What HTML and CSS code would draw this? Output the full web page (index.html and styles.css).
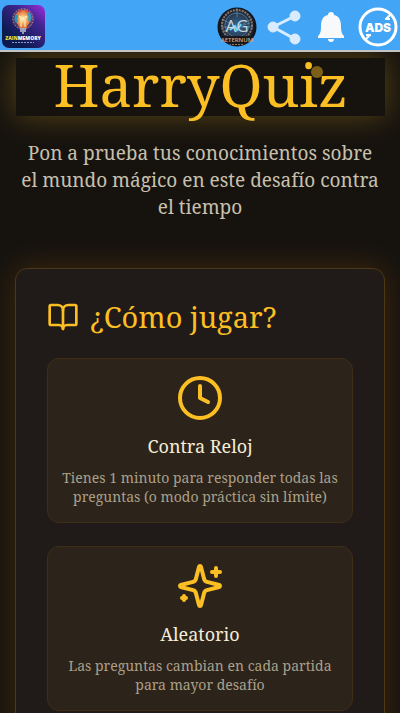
FILE: index.html
```
<!DOCTYPE html>
<html lang="es">
<head>
    <meta charset="UTF-8">
    <meta name="viewport" content="width=device-width, initial-scale=1.0">
    <title>HarryQuiz</title>
    <link rel="stylesheet" href="styles.css">
</head>
<body>
    <header class="topbar">
        <a class="brand" href="#" aria-label="ZainMemory">
            <svg class="brand-logo" viewBox="0 0 43 43">
                <defs>
                    <linearGradient id="brandBg" x1="1" y1="0" x2="0.3" y2="0.8">
                        <stop offset="0" stop-color="#a42be0"/>
                        <stop offset="0.4" stop-color="#40268f"/>
                        <stop offset="1" stop-color="#0b1b50"/>
                    </linearGradient>
                    <radialGradient id="bulb">
                        <stop offset="0" stop-color="#fff3c4"/>
                        <stop offset="0.5" stop-color="#f5ac62"/>
                        <stop offset="1" stop-color="#d76b3a"/>
                    </radialGradient>
                </defs>
                <rect width="43" height="43" rx="7" fill="url(#brandBg)"/>
                <circle cx="21" cy="14" r="11" fill="#df9b58" opacity="0.2"/>
                <circle cx="21" cy="14" r="10" fill="none" stroke="#e5ac70" stroke-width="1" stroke-dasharray="1 2"/>
                <path d="M17 23c0-4-4-5-4-10a8 8 0 0 1 16 0c0 5-4 6-4 10z" fill="url(#bulb)"/>
                <path d="M15 10a7 7 0 0 0 0 7" fill="none" stroke="#2797b4" stroke-width="3"/>
                <path d="M26 8a7 7 0 0 1 1 8" fill="none" stroke="#3b9dc9" stroke-width="3"/>
                <path d="M17 7l3-2M23 5l3 2" stroke="#e44b42" stroke-width="2"/>
                <path d="M19 22v-8l-2-3 4 2 4-2-2 3v8" fill="none" stroke="#fff0b5" stroke-width="1"/>
                <path d="M18 24h6M18 26h6M20 28h2" stroke="#bdc4dc" stroke-width="1.4"/>
                <text class="brand-name" x="21" y="35"><tspan fill="#f8d53c">ZAIN</tspan><tspan fill="#fff">MEMORY</tspan></text>
                <path d="M10 37.500h22" stroke="#8c9bc5" stroke-width="1" stroke-dasharray="2 1"/>
            </svg>
        </a>
        <nav class="actions">
            <a class="action" href="#" aria-label="Aeternum">
                <svg viewBox="0 0 40 40">
                    <defs>
                        <clipPath id="badgeClip"><circle cx="20" cy="20" r="19"/></clipPath>
                        <radialGradient id="badgeBg">
                            <stop offset="0" stop-color="#2a6c9c"/>
                            <stop offset="0.6" stop-color="#2d4058"/>
                            <stop offset="1" stop-color="#15171e"/>
                        </radialGradient>
                    </defs>
                    <circle cx="20" cy="20" r="19.500" fill="#11151d"/>
                    <circle cx="20" cy="19" r="18" fill="url(#badgeBg)"/>
                    <g clip-path="url(#badgeClip)">
                        <circle cx="20" cy="18" r="15" fill="none" stroke="#8a7468" stroke-width="2" stroke-dasharray="2 1"/>
                        <circle cx="20" cy="18" r="12" fill="none" stroke="#467797" stroke-width="1"/>
                        <path d="M5 12l9 5M35 12l-9 5M20 1v9M7 24l26-8M4 20h32" stroke="#6e91a2" stroke-width="1" opacity="0.7"/>
                        <path d="M13 23l5-4 2 4 4-6" fill="none" stroke="#68d8ff" stroke-width="2"/>
                        <rect y="29" width="40" height="11" fill="#17191f"/>
                        <path d="M12 37.500h16" stroke="#94745c" stroke-width="1" stroke-dasharray="2 1"/>
                    </g>
                    <text class="badge-initials" x="20" y="25">AG</text>
                    <text class="badge-name" x="20" y="35">AETERNUM</text>
                </svg>
            </a>
            <button class="action" type="button" aria-label="Compartir">
                <svg viewBox="0 0 40 40" fill="#d9ecff" stroke="#d9ecff">
                    <path d="M31 9L9 20l22 12" fill="none" stroke-width="3"/>
                    <circle cx="31" cy="9" r="5"/>
                    <circle cx="9" cy="20" r="5"/>
                    <circle cx="31" cy="32" r="5"/>
                </svg>
            </button>
            <button class="action" type="button" aria-label="Notificaciones">
                <svg viewBox="0 0 40 40" fill="#f8f9fb">
                    <path d="M17 8a3 3 0 1 1 6 0c5 1 7 5 7 11 0 6 1 8 3 10v2H7v-2c2-2 3-4 3-10 0-6 2-10 7-11z"/>
                    <path d="M17 32h6a3 3 0 0 1-6 0z"/>
                </svg>
            </button>
            <button class="action" type="button" aria-label="Quitar anuncios">
                <svg viewBox="0 0 40 40">
                    <circle cx="20" cy="20" r="18" fill="none" stroke="#fff" stroke-width="3"/>
                    <path d="M33 7l-5 5M27 12h5M7 33l5-5M8 28h5" stroke="#fff" stroke-width="2"/>
                    <text class="ads-text" x="20" y="25">ADS</text>
                </svg>
            </button>
        </nav>
    </header>

    <main class="page">
        <section class="hero">
            <h1 class="hero-title">HarryQuiz<span class="spark"></span></h1>
            <p class="hero-text">Pon a prueba tus conocimientos sobre el mundo mágico en este desafío contra el tiempo</p>
        </section>

        <section class="panel">
            <h2 class="panel-title">
                <svg class="panel-icon line-icon" viewBox="0 0 24 24">
                    <path d="M12 7v14"/>
                    <path d="M3 18a1 1 0 0 1-1-1V4a1 1 0 0 1 1-1h5a4 4 0 0 1 4 4 4 4 0 0 1 4-4h5a1 1 0 0 1 1 1v13a1 1 0 0 1-1 1h-6a3 3 0 0 0-3 3 3 3 0 0 0-3-3z"/>
                </svg>
                ¿Cómo jugar?
            </h2>
            <div class="rules">
                <article class="rule">
                    <svg class="rule-icon line-icon" viewBox="0 0 24 24">
                        <circle cx="12" cy="12" r="10"/>
                        <path d="M12 6v6l4 2"/>
                    </svg>
                    <h3 class="rule-title">Contra Reloj</h3>
                    <p class="rule-text">Tienes 1 minuto para responder todas las preguntas (o modo práctica sin límite)</p>
                </article>
                <article class="rule">
                    <svg class="rule-icon line-icon" viewBox="0 0 24 24">
                        <path d="M9.937 15.500A2 2 0 0 0 8.500 14.063l-6.135-1.582a.5.5 0 0 1 0-.962L8.500 9.936A2 2 0 0 0 9.937 8.500l1.582-6.135a.5.5 0 0 1 .963 0L14.063 8.500A2 2 0 0 0 15.500 9.937l6.135 1.581a.5.5 0 0 1 0 .964L15.500 14.063a2 2 0 0 0-1.437 1.437l-1.582 6.135a.5.5 0 0 1-.963 0z"/>
                        <path d="M20 3v4M22 5h-4M4 17v2M5 18H3"/>
                    </svg>
                    <h3 class="rule-title">Aleatorio</h3>
                    <p class="rule-text">Las preguntas cambian en cada partida para mayor desafío</p>
                </article>
            </div>
        </section>
    </main>
</body>
</html>
```
FILE: styles.css
```
* {
    box-sizing: border-box;
}

body {
    margin: 0;
    height: 100vh;
    display: flex;
    flex-direction: column;
    overflow: hidden;
    background-color: #16130f;
    color: #f5ecd7;
    font-family: "Noto Serif", "DejaVu Serif Condensed", "DejaVu Serif", serif;
}

h1, h2, h3, p {
    margin: 0;
    font-weight: 400;
}

svg {
    display: block;
}

/* Top bar */
.topbar {
    position: relative;
    z-index: 1;
    flex: none;
    display: flex;
    justify-content: space-between;
    align-items: center;
    height: 52px;
    padding: 3px 2px 0;
    background-color: #42a5f5;
    border-bottom: 2px solid #c4c4c4;
}

.brand-logo {
    width: 43px;
    height: 43px;
}

.brand-name {
    font: 800 5px "Open Sans", sans-serif;
    text-anchor: middle;
}

.actions {
    display: flex;
    gap: 7px;
}

.action {
    width: 40px;
    height: 40px;
    padding: 0;
    border: none;
    background: none;
    cursor: pointer;
}

.badge-initials {
    font: 400 17px "Open Sans", sans-serif;
    fill: #c6d5de;
    text-anchor: middle;
}

.badge-name {
    font: 600 6px "Open Sans", sans-serif;
    fill: #d3a983;
    text-anchor: middle;
}

.ads-text {
    font: 900 12px Inter, sans-serif;
    fill: #fff;
    text-anchor: middle;
}

/* Content */
.page {
    flex: 1;
    min-height: 0;
    padding: 6px 15px 32px;
    overflow: hidden;
}

.hero {
    margin-bottom: 47px;
    text-align: center;
}

.hero-title {
    margin: 0 0 24px 1px;
    padding-bottom: 4px;
    background-color: #16130f;
    box-shadow: 0 0 30px rgba(251, 191, 36, 0.3);
    color: #fbbf24;
    font-size: 58px;
    line-height: 54px;
}

/* floating magic dust over the title */
.spark {
    position: absolute;
    top: 66px;
    left: calc(50% + 111px);
    width: 12px;
    height: 12px;
    border-radius: 50%;
    background-color: #fbbf24;
    opacity: 0.45;
}

.hero-text {
    padding: 0 4px;
    color: #c8c0ad;
    font-size: 19px;
    line-height: 27px;
}

.panel {
    padding: 31px;
    background-color: #201b18;
    border: 1px solid #4c3814;
    border-radius: 12px;
    box-shadow: 0 0 30px rgba(217, 119, 6, 0.22);
}

.line-icon {
    fill: none;
    stroke: #fbbf24;
    stroke-width: 2;
    stroke-linecap: round;
    stroke-linejoin: round;
}

.panel-title {
    display: flex;
    align-items: center;
    gap: 11px;
    margin-bottom: 24px;
    color: #fbbf24;
    font-size: 29px;
    line-height: 34px;
}

.panel-icon {
    flex: none;
    width: 32px;
    height: 32px;
}

.rules {
    display: grid;
    gap: 23px;
}

.rule {
    padding: 15px 12px 16px;
    background-color: #2c231a;
    border: 1px solid #3f2e15;
    border-radius: 12px;
    text-align: center;
}

.rule-icon {
    width: 48px;
    height: 48px;
    margin: 0 auto 11px;
}

.rule-title {
    margin-bottom: 9px;
    font-size: 18px;
    line-height: 26px;
}

.rule-text {
    color: #aaa08a;
    font-size: 14px;
    line-height: 19px;
}
```
